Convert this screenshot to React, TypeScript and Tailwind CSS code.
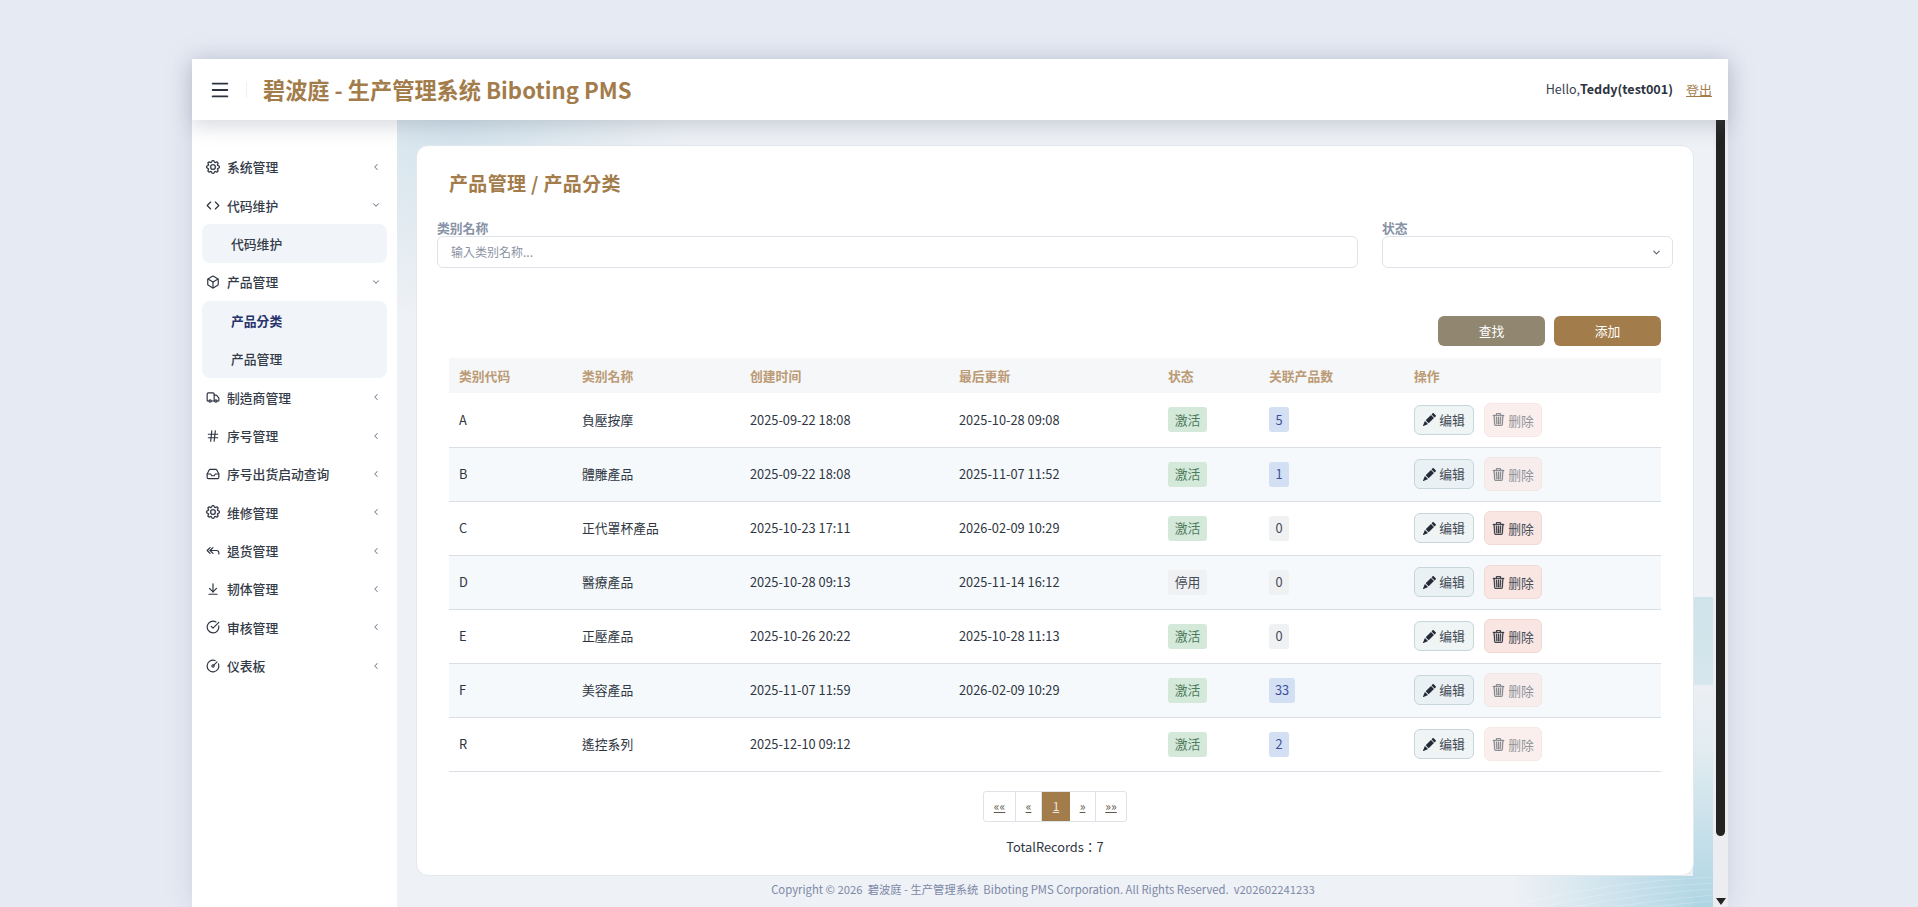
import { ReactNode } from "react"
import {
  ArrowDownToLine,
  Box,
  ChevronDown,
  ChevronLeft,
  CircleCheckBig,
  CircleGauge,
  Code,
  Hash,
  Inbox,
  Menu,
  ReplyAll,
  Truck,
} from "lucide-react"
import { BsGear, BsPencilFill, BsTrash3 } from "react-icons/bs"

const rows = [
  { code: "A", name: "負壓按摩", created: "2025-09-22 18:08", updated: "2025-10-28 09:08", status: "激活", count: 5 },
  { code: "B", name: "體雕產品", created: "2025-09-22 18:08", updated: "2025-11-07 11:52", status: "激活", count: 1 },
  { code: "C", name: "正代罩杯產品", created: "2025-10-23 17:11", updated: "2026-02-09 10:29", status: "激活", count: 0 },
  { code: "D", name: "醫療產品", created: "2025-10-28 09:13", updated: "2025-11-14 16:12", status: "停用", count: 0 },
  { code: "E", name: "正壓產品", created: "2025-10-26 20:22", updated: "2025-10-28 11:13", status: "激活", count: 0 },
  { code: "F", name: "美容產品", created: "2025-11-07 11:59", updated: "2026-02-09 10:29", status: "激活", count: 33 },
  { code: "R", name: "遙控系列", created: "2025-12-10 09:12", updated: "", status: "激活", count: 2 },
]

const headers = ["类别代码", "类别名称", "创建时间", "最后更新", "状态", "关联产品数", "操作"]

function NavItem({ icon, label, open }: { icon: ReactNode; label: string; open?: boolean }) {
  return (
    <div className="h-[38.4px] flex items-center pl-[14px] pr-[16px] text-[12.8px] font-medium text-[#343b48]">
      <span className="w-[14px] flex justify-center text-[#2c3340]">{icon}</span>
      <span className="ml-[7px] flex-1">{label}</span>
      {open ? (
        <ChevronDown size={10} strokeWidth={2.5} className="text-[#7a8290]" />
      ) : (
        <ChevronLeft size={10} strokeWidth={2.5} className="text-[#7a8290]" />
      )}
    </div>
  )
}

function SubMenu({ items, active }: { items: string[]; active?: string }) {
  return (
    <div className="mx-[10px] w-[185px] rounded-lg bg-[#f1f5f9]">
      {items.map((item) => (
        <div
          key={item}
          className={
            item === active
              ? "h-[38.4px] flex items-center pl-[29px] text-[12.8px] font-bold text-[#27336b]"
              : "h-[38.4px] flex items-center pl-[29px] text-[12.8px] font-medium text-[#343b48]"
          }
        >
          {item}
        </div>
      ))}
    </div>
  )
}

function Sidebar() {
  const gear = <BsGear className="text-[14px]" stroke="currentColor" strokeWidth={0.5} />
  return (
    <aside className="w-[205px] shrink-0 bg-white pt-[27.6px]">
      <NavItem icon={gear} label="系统管理" />
      <NavItem icon={<Code size={15} strokeWidth={2} />} label="代码维护" open />
      <SubMenu items={["代码维护"]} />
      <NavItem icon={<Box size={14} strokeWidth={2} />} label="产品管理" open />
      <SubMenu items={["产品分类", "产品管理"]} active="产品分类" />
      <NavItem icon={<Truck size={15} strokeWidth={2} />} label="制造商管理" />
      <NavItem icon={<Hash size={14} strokeWidth={2} />} label="序号管理" />
      <NavItem icon={<Inbox size={14} strokeWidth={2} />} label="序号出货启动查询" />
      <NavItem icon={gear} label="维修管理" />
      <NavItem icon={<ReplyAll size={15} strokeWidth={2} />} label="退货管理" />
      <NavItem icon={<ArrowDownToLine size={14} strokeWidth={2} />} label="韧体管理" />
      <NavItem icon={<CircleCheckBig size={14} strokeWidth={2} />} label="审核管理" />
      <NavItem icon={<CircleGauge size={14} strokeWidth={2} />} label="仪表板" />
    </aside>
  )
}

function Filters() {
  return (
    <div className="grid grid-cols-[921px_291px] gap-x-6 mt-[23px]">
      <div>
        <label className="block h-[16px] leading-[16px] text-[12.8px] font-bold text-[#8792a6]">类别名称</label>
        <input
          placeholder="输入类别名称..."
          className="block w-full h-[32px] rounded-md border border-[#dfe3ea] bg-white px-[13px] pb-[2px] text-[12px] outline-none placeholder:text-[#8b93a3]"
        />
      </div>
      <div>
        <label className="block h-[16px] leading-[16px] text-[12.8px] font-bold text-[#8792a6]">状态</label>
        <div className="h-[32px] rounded-md border border-[#dfe3ea] bg-white flex items-center justify-end pr-[10px]">
          <ChevronDown size={11} strokeWidth={2.5} className="text-[#5b6472]" />
        </div>
      </div>
    </div>
  )
}

function StatusBadge({ status }: { status: string }) {
  const tone = status === "激活" ? "bg-[#d5e9da] text-[#4d7a5c]" : "bg-[#f0f1f3] text-[#444b57]"
  return <span className={`inline-flex h-[25px] w-[39px] items-center justify-center rounded-[3px] ${tone}`}>{status}</span>
}

function CountBadge({ count }: { count: number }) {
  const tone = count > 0 ? "bg-[#d3dff2] text-[#3f4f9c]" : "bg-[#f0f1f3] text-[#444b57]"
  return (
    <span className={`inline-flex h-[25px] min-w-[20px] px-[6px] items-center justify-center rounded-[3px] ${tone}`}>
      {count}
    </span>
  )
}

function Actions({ canDelete }: { canDelete: boolean }) {
  return (
    <div className="flex items-center gap-[10px]">
      <button className="h-[30px] w-[60px] flex items-center justify-center gap-[3px] rounded-md border border-[#c8d5da] bg-[#dfe9ec]/50 text-[12.8px] text-[#444b57]">
        <BsPencilFill className="text-[13px] text-[#252b36]" />
        编辑
      </button>
      <button
        className={
          canDelete
            ? "h-[34px] w-[58px] flex items-center justify-center gap-[3px] rounded-md border border-[#f3d9d4] bg-[#f9e6e2] text-[12.8px] text-[#444b57]"
            : "h-[34px] w-[58px] flex items-center justify-center gap-[3px] rounded-md border border-[#f3d9d4] bg-[#f9e6e2] text-[12.8px] text-[#444b57] opacity-60"
        }
      >
        <BsTrash3 className="text-[13px] text-[#252b36]" stroke="currentColor" strokeWidth={0.4} />
        <span className="pt-[2px]">删除</span>
      </button>
    </div>
  )
}

function DataTable() {
  return (
    <table className="w-full table-fixed border-collapse text-[12.8px] text-[#2f3642]">
      <colgroup>
        <col className="w-[123px]" />
        <col className="w-[168px]" />
        <col className="w-[209px]" />
        <col className="w-[209px]" />
        <col className="w-[101px]" />
        <col className="w-[145px]" />
        <col />
      </colgroup>
      <thead>
        <tr className="h-[35px] bg-[#f6f7f8]">
          {headers.map((h) => (
            <th key={h} className="px-[10px] text-left font-bold text-[#bb9a75]">
              {h}
            </th>
          ))}
        </tr>
      </thead>
      <tbody>
        {rows.map((row, i) => (
          <tr key={row.code} className={i % 2 === 1 ? "h-[54px] border-b border-[#d9dee5] bg-[#f5f9fc]" : "h-[54px] border-b border-[#d9dee5]"}>
            <td className="px-[10px]">{row.code}</td>
            <td className="px-[10px]">{row.name}</td>
            <td className="px-[10px]">{row.created}</td>
            <td className="px-[10px]">{row.updated}</td>
            <td className="px-[10px]">
              <StatusBadge status={row.status} />
            </td>
            <td className="px-[10px]">
              <CountBadge count={row.count} />
            </td>
            <td className="px-[10px]">
              <Actions canDelete={row.count === 0} />
            </td>
          </tr>
        ))}
      </tbody>
    </table>
  )
}

function Pagination() {
  const pages = [
    { label: "««", w: "w-[32px]" },
    { label: "«", w: "w-[26px]" },
    { label: "1", w: "w-[28px]", active: true },
    { label: "»", w: "w-[26px]" },
    { label: "»»", w: "w-[30px]" },
  ]
  return (
    <div className="flex justify-center mt-[19px]">
      <div className="flex h-[31px] rounded-[3px] border border-[#dfe2e7] overflow-hidden">
        {pages.map((p) => (
          <div
            key={p.label}
            className={
              p.active
                ? `${p.w} flex items-center justify-center bg-[#a37c4b] text-[12px] underline text-white/80`
                : `${p.w} flex items-center justify-center border-r border-[#dfe2e7] last:border-r-0 text-[12px] underline text-[#5f5a4c]`
            }
          >
            {p.label}
          </div>
        ))}
      </div>
    </div>
  )
}

function Scrollbar() {
  return (
    <div className="w-[15px] shrink-0 bg-[#ecedf1] flex flex-col items-center">
      <div className="h-[716px] w-[9px] rounded-b-full bg-[#232323]" />
      <div className="mt-[62px] h-0 w-0 border-x-[5px] border-t-[7px] border-x-transparent border-t-[#232323]" />
    </div>
  )
}

// faint wave lines of the background image, bottom right corner
function Waves() {
  return (
    <svg className="absolute right-0 bottom-0" width="190" height="34" viewBox="0 0 190 34" fill="none" stroke="#fff" strokeOpacity="0.2">
      <path d="M0 30 Q90 8 190 4" />
      <path d="M20 34 Q100 14 190 10" />
      <path d="M50 34 Q120 20 190 16" />
      <path d="M90 34 Q140 26 190 22" />
      <path d="M130 34 Q160 30 190 28" />
    </svg>
  )
}

export default function App() {
  return (
    <div className="h-[907px] overflow-hidden bg-[#e6eaf3] pt-[59px] font-['Noto_Sans_CJK_TC','Noto_Sans',sans-serif]">
      <div className="ml-[192px] w-[1536px] h-[848px] flex flex-col shadow-[0_0_24px_rgba(120,135,165,0.25)]">
        <header className="relative z-10 h-[61px] shrink-0 bg-white flex items-center shadow-[0_6px_20px_rgba(90,105,125,0.25)]">
          <div className="w-[54px] pl-[17px]">
            <Menu size={22} strokeWidth={2} className="text-[#2c3340]" />
          </div>
          <div className="h-[16px] w-px bg-[#eef0f3]" />
          <h1 className="ml-[16px] text-[22.2px] font-bold text-[#a37c4b] flex-1">碧波庭 - 生产管理系统 Biboting PMS</h1>
          <div className="text-[12.6px] text-[#3a4150]">
            Hello,<span className="font-bold text-[#2c3340]">Teddy(test001)</span>
          </div>
          <a className="ml-[13px] mr-[16px] text-[13px] underline text-[#a37c4b]">登出</a>
        </header>
        <div className="flex flex-1 min-h-0">
          <Sidebar />
          <main className="flex-1 flex">
            <div className="relative flex-1 pl-[19px] pr-[19px] pt-[25px] [background:linear-gradient(to_bottom,transparent_477px,#cfe3ea_477px,#d6e7ed_565px,#eceff3_565px,#e2ecf1_630px,#aed5e4_100%)_right_top/20px_100%_no-repeat,linear-gradient(to_right,transparent,#aed5e4)_right_bottom/200px_31px_no-repeat,radial-gradient(ellipse_230px_200px_at_60px_0px,#d3e3ec,transparent)_left_top/100%_100%_no-repeat,#eef1f5]">
              <Waves />
              <section className="relative h-[731px] rounded-xl border border-[#e2e7ee] bg-white pl-[20px] pr-[20px]">
                <h2 className="mt-[23px] pl-[12px] text-[19px] leading-[28px] tracking-[0.35px] font-bold text-[#a37c4b]">产品管理 / 产品分类</h2>
                <Filters />
                <div className="px-[12px]">
                  <div className="mt-[48px] flex justify-end gap-[9px]">
                    <button className="h-[30px] w-[107px] rounded-md bg-[#91866f] text-[12.8px] text-white">查找</button>
                    <button className="h-[30px] w-[107px] rounded-md bg-[#a37c4b] text-[12.8px] text-white">添加</button>
                  </div>
                  <div className="mt-[12px]">
                    <DataTable />
                  </div>
                  <Pagination />
                  <p className="mt-[15px] text-center text-[12.8px] text-[#2f3642]">TotalRecords：7</p>
                </div>
              </section>
              <p className="relative mt-[5px] pr-[24px] text-center text-[11.3px] leading-[16px] text-[#7d88a8]">
                Copyright © 2026&nbsp; 碧波庭 - 生产管理系统&nbsp; Biboting PMS Corporation. All Rights Reserved.&nbsp; v202602241233
              </p>
            </div>
            <Scrollbar />
          </main>
        </div>
      </div>
    </div>
  )
}
